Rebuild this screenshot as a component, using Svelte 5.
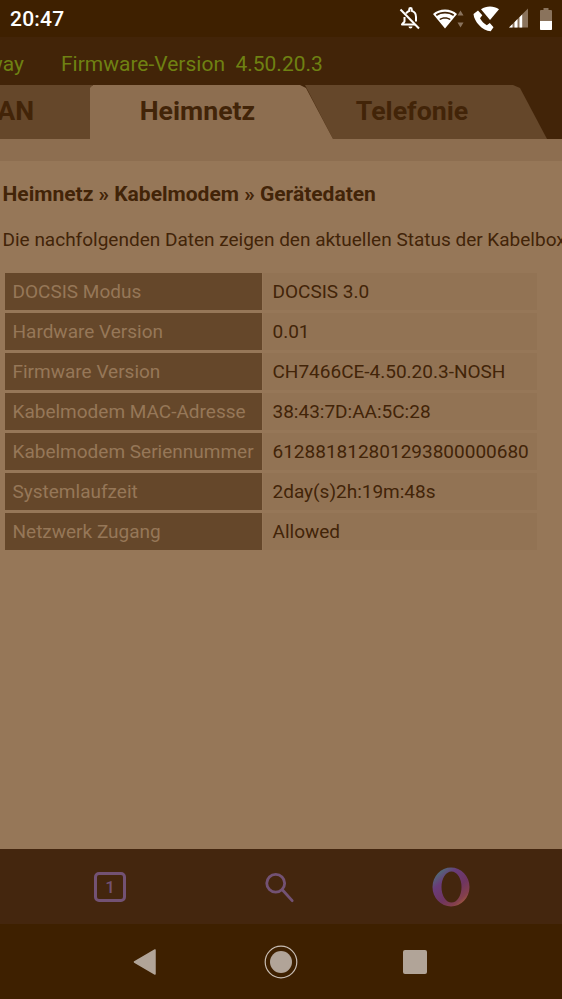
<script lang="ts">
  const rows = [
    ["DOCSIS Modus", "DOCSIS 3.0"],
    ["Hardware Version", "0.01"],
    ["Firmware Version", "CH7466CE-4.50.20.3-NOSH"],
    ["Kabelmodem MAC-Adresse", "38:43:7D:AA:5C:28"],
    ["Kabelmodem Seriennummer", "612881812801293800000680"],
    ["Systemlaufzeit", "2day(s)2h:19m:48s"],
    ["Netzwerk Zugang", "Allowed"],
  ];
</script>

<div class="screen">
  <header class="status">
    <span class="clock">20:47</span>
    <div class="status-icons">
      <svg class="bell" width="22" height="24" viewBox="0 0 22 24" fill="none">
        <path d="M7 6.500c1-1.600 2.200-2.400 3.200-2.600V2.400a1.300 1.300 0 0 1 2.600 0v1.500c2.600.7 4.200 3 4.200 6v4.600" stroke="#fff" stroke-width="2"/>
        <path d="M5.500 10v4.500L3 17.500h13" stroke="#fff" stroke-width="2" stroke-linejoin="round"/>
        <path d="M9.500 19.500h4a2 2 0 0 1-4 0Z" fill="#fff"/>
        <path d="M1.500 2.500 20 21.500" stroke="#fff" stroke-width="2"/>
      </svg>
      <svg class="wifi" width="31" height="24" viewBox="0 0 31 24">
        <path d="M12 21.500 0 7C3.200 4.200 7.300 2.500 12 2.500S20.800 4.200 24 7Z" fill="#fff"/>
        <path d="M2.800 7.600C5.300 5.700 8.500 4.800 12 4.800s6.700.9 9.200 2.800l-1 1.300C17.900 7.200 15.100 6.400 12 6.400s-5.900.8-8.200 2.500ZM6.300 11.900C8 10.800 9.900 10.200 12 10.200s4 .6 5.700 1.700l-1 1.200c-1.400-.9-3-1.400-4.700-1.400s-3.300.5-4.700 1.400Z" fill="#422408"/>
        <path d="M27.500 3.500l3 5h-6ZM27.500 20.500l-3-5h6Z" fill="#8a735c"/>
      </svg>
      <svg class="call" width="27" height="26" viewBox="0 0 27 26">
        <path d="M17 14 8 3.200C10.700 1.400 13.800.500 17 .500s6.300.9 9 2.700Z" fill="#fff"/>
        <path d="M5 4.500 9.300 9.300 7 12.300c1.600 3 3.800 5.300 6.800 6.900l3-2.300 3.700 4.300-2.800 4.100C9.500 25 1 15.500.5 8Z" fill="#fff"/>
      </svg>
      <svg class="signal" width="19" height="20" viewBox="0 0 19 20">
        <path d="M19 .500V19.500H0Z" fill="#8a735c"/>
        <path d="M0 19.500h3.500V16ZM5.500 19.500h3V11l-3 3.200ZM10.500 19.500h2.700V6.500l-2.700 2.700Z" fill="#fff"/>
      </svg>
      <svg class="battery" width="12" height="22" viewBox="0 0 12 22">
        <path d="M3.500 0h5v2H11a1 1 0 0 1 1 1v18a1 1 0 0 1-1 1H1a1 1 0 0 1-1-1V3a1 1 0 0 1 1-1h2.500Z" fill="#8a735c"/>
        <path d="M0 13h12v8a1 1 0 0 1-1 1H1a1 1 0 0 1-1-1Z" fill="#fff"/>
      </svg>
    </div>
  </header>

  <div class="info">
    <span class="gateway">way</span>
    <span>Firmware-Version&nbsp; 4.50.20.3</span>
  </div>

  <nav class="tabs">
    <div class="tab lan">AN</div>
    <div class="tab telefonie">Telefonie</div>
    <div class="tab active">Heimnetz</div>
  </nav>

  <div class="band"></div>

  <main class="content">
    <h1>Heimnetz » Kabelmodem » Gerätedaten</h1>
    <p>Die nachfolgenden Daten zeigen den aktuellen Status der Kabelbox.</p>
    <table>
      <tbody>
        {#each rows as [label, value]}
          <tr>
            <th scope="row">{label}</th>
            <td>{value}</td>
          </tr>
        {/each}
      </tbody>
    </table>
  </main>

  <div class="toolbar">
    <div class="tabcount">1</div>
    <svg class="search" width="32" height="32" viewBox="0 0 34 34" fill="none">
      <circle cx="13.500" cy="13" r="9.500" stroke="#735274" stroke-width="3"/>
      <path d="M20.500 20 31 31.500" stroke="#735274" stroke-width="3" stroke-linecap="round"/>
    </svg>
    <svg class="opera" width="38" height="40" viewBox="0 0 38 40">
      <defs>
        <linearGradient id="ring" x1="0.150" y1="0.100" x2="0.850" y2="0.950">
          <stop offset="0" stop-color="#4f6d78"/>
          <stop offset="0.250" stop-color="#693c79"/>
          <stop offset="0.600" stop-color="#6f3560"/>
          <stop offset="0.850" stop-color="#84404c"/>
          <stop offset="1" stop-color="#a85f3c"/>
        </linearGradient>
      </defs>
      <path fill-rule="evenodd" d="M.5 20a18.500 19.500 0 1 0 37 0a18.500 19.500 0 1 0-37 0ZM9.500 20a10 15.500 0 1 0 20 0a10 15.500 0 1 0-20 0Z" fill="url(#ring)"/>
    </svg>
  </div>

  <div class="navbar">
    <svg width="24" height="26" viewBox="0 0 24 26">
      <path d="M22 1v24L1.500 13Z" fill="#b1a498" stroke="#b1a498" stroke-width="1.500" stroke-linejoin="round"/>
    </svg>
    <svg class="home" width="34" height="36" viewBox="0 0 34 36" fill="none">
      <circle cx="17" cy="18" r="15.800" stroke="#c8bdb3" stroke-width="1.200"/>
      <circle cx="17" cy="18" r="11" fill="#b1a498"/>
    </svg>
    <span class="square"></span>
  </div>
</div>

<style>
  :global(body) {
    margin: 0;
    background: #967758;
  }

  .screen {
    width: 562px;
    height: 999px;
    overflow: hidden;
    display: flex;
    flex-direction: column;
    font-family: Roboto, "Noto Sans", sans-serif;
  }

  .status {
    height: 37px;
    flex: none;
    display: flex;
    align-items: center;
    justify-content: space-between;
    padding: 0 10px;
    background: #3e2000;
    color: #fff;
  }

  .clock {
    font-size: 21px;
    font-weight: 500;
    letter-spacing: 0.2px;
  }

  .status-icons {
    display: flex;
    align-items: center;
  }

  .wifi {
    margin-left: 12px;
  }

  .call {
    margin-left: 9px;
  }

  .signal {
    margin-left: 9px;
    margin-top: -1px;
  }

  .battery {
    margin-left: 12px;
  }

  .info {
    height: 48px;
    flex: none;
    display: flex;
    align-items: center;
    gap: 37px;
    padding-top: 6px;
    box-sizing: border-box;
    margin-left: -47px;
    background: #422408;
    color: #6f8112;
    font-size: 21px;
    white-space: nowrap;
  }

  .gateway {
    width: 71px;
    text-align: right;
  }

  .tabs {
    position: relative;
    height: 54px;
    flex: none;
    background: #422408;
  }

  .tab {
    position: absolute;
    top: 0;
    height: 54px;
    display: flex;
    align-items: center;
    justify-content: center;
    box-sizing: border-box;
    padding-bottom: 3px;
    font-size: 26.700px;
    font-weight: 700;
    color: #422408;
  }

  .lan {
    left: 0;
    width: 92px;
    justify-content: flex-end;
    padding-right: 58px;
    background: #65472a;
  }

  .active {
    left: 90px;
    width: 243px;
    padding-right: 28px;
    background: #8d6e50;
    clip-path: polygon(0 54px, 0 3px, 3px 0, 210px 0, 216px 3px, 243px 54px);
  }

  .telefonie {
    left: 305px;
    width: 242px;
    padding-right: 28px;
    background: #65472a;
    clip-path: polygon(0 0, 208px 0, 215px 3px, 242px 54px, 28px 54px);
  }

  .band {
    height: 22px;
    flex: none;
    background: #8d6e50;
  }

  .content {
    flex: 1;
    min-height: 0;
    padding: 21px 0 0 2.500px;
    background: #967758;
    color: #422408;
  }

  h1 {
    margin: 0;
    font-size: 21px;
    line-height: 24px;
    font-weight: 700;
    white-space: nowrap;
  }

  p {
    margin: 22px 0 0;
    font-size: 19px;
    line-height: 24px;
    white-space: nowrap;
  }

  table {
    margin: 21px 0 0 2.500px;
    width: 532px;
    border-collapse: separate;
    border-spacing: 0;
    font-size: 19px;
  }

  tr {
    height: 40px;
  }

  th,
  td {
    padding: 0;
    font-weight: 400;
    text-align: left;
    border-bottom: 3px solid #967758;
  }

  th {
    width: 257px;
    padding-left: 7.500px;
    box-sizing: border-box;
    background: #65472a;
    color: #967758;
    white-space: nowrap;
  }

  td {
    padding-left: 9.500px;
    background: #927354;
    border-left: 1px solid #967758;
  }

  .toolbar {
    height: 75px;
    flex: none;
    display: flex;
    align-items: center;
    padding-left: 94px;
    background: #44260e;
  }

  .tabcount {
    width: 32px;
    height: 30px;
    display: flex;
    align-items: center;
    justify-content: center;
    box-sizing: border-box;
    border: 3px solid #735274;
    border-radius: 5px;
    color: #735274;
    font-size: 17px;
    font-weight: 500;
  }

  .search {
    margin-left: 137px;
  }

  .opera {
    margin-left: 137px;
  }

  .navbar {
    height: 75px;
    flex: none;
    display: flex;
    align-items: center;
    padding-left: 133px;
    background: #3e2000;
  }

  .home {
    margin-left: 107px;
  }

  .square {
    width: 24px;
    height: 24px;
    margin-left: 105px;
    border-radius: 2px;
    background: #b1a498;
  }
</style>
